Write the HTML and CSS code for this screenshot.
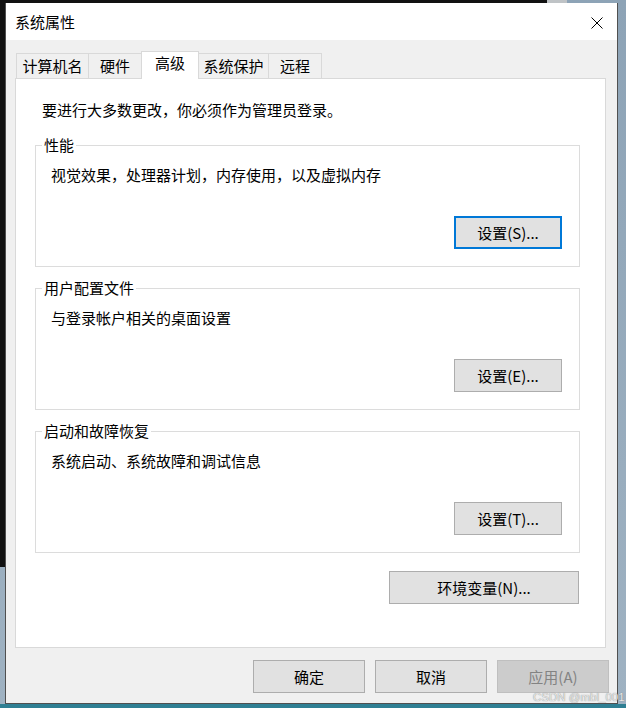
FILE: index.html
```html
<!DOCTYPE html>
<html lang="zh-CN">
<head>
<meta charset="utf-8">
<title>系统属性</title>
<link rel="stylesheet" href="styles.css">
</head>
<body>
<div class="window">
  <div class="titlebar">
    <span class="title">系统属性</span>
    <svg class="close" width="12" height="12" viewBox="0 0 12 12"><path d="M0.5 0.5 L11.5 11.5 M11.5 0.5 L0.5 11.5" stroke="#000" stroke-width="1" fill="none"/></svg>
  </div>
  <div class="content">
    <div class="tabs">
      <div class="tab t1">计算机名</div>
      <div class="tab t2">硬件</div>
      <div class="tab t3 selected">高级</div>
      <div class="tab t4">系统保护</div>
      <div class="tab t5">远程</div>
    </div>
    <div class="panel">
      <div class="intro">要进行大多数更改，你必须作为管理员登录。</div>
      <div class="groups">
        <div class="group">
          <span class="legend">性能</span>
          <div class="gtext">视觉效果，处理器计划，内存使用，以及虚拟内存</div>
          <button class="btn gbtn focused">设置(S)...</button>
        </div>
        <div class="group">
          <span class="legend">用户配置文件</span>
          <div class="gtext">与登录帐户相关的桌面设置</div>
          <button class="btn gbtn">设置(E)...</button>
        </div>
        <div class="group">
          <span class="legend">启动和故障恢复</span>
          <div class="gtext">系统启动、系统故障和调试信息</div>
          <button class="btn gbtn">设置(T)...</button>
        </div>
      </div>
      <button class="btn envbtn">环境变量(N)...</button>
    </div>
    <div class="footer">
      <button class="btn fbtn">确定</button>
      <button class="btn fbtn">取消</button>
      <button class="btn fbtn disabled">应用(A)</button>
    </div>
  </div>
</div>
<div class="watermark">CSDN @mbl_001</div>
</body>
</html>
```
FILE: styles.css
```css
html, body {
  margin: 0;
  padding: 0;
}
body {
  width: 626px;
  height: 708px;
  overflow: hidden;
  position: relative;
  font-family: "Noto Sans CJK SC", "Noto Sans", sans-serif;
  font-size: 15px;
  color: #000;
  background:
    linear-gradient(#111, #111) no-repeat 0 0 / 547px 3px,
    linear-gradient(#bfc3c6, #bfc3c6) no-repeat 547px 0 / 20px 3px,
    linear-gradient(#111, #111) no-repeat 0 0 / 5px 567px,
    linear-gradient(#2f7f93, #2f7f93) no-repeat 0 704px / 100% 4px,
    linear-gradient(180deg, #8da3b6, #9fb2c2);
}
.window {
  margin: 3px 0 0 5px;
  width: 613px;
  height: 701px;
  box-sizing: border-box;
  border: 1px solid #505050;
  border-top: none;
  background: #f0f0f0;
  display: flex;
  flex-direction: column;
}
.titlebar {
  height: 37px;
  flex: none;
  background: #fff;
  display: flex;
  align-items: center;
  justify-content: space-between;
  padding: 0 14px 0 9px;
}
.title {
  font-size: 15px;
  line-height: 20px;
}
.close {
  display: block;
  margin-top: 2px;
}
.content {
  flex: 1;
  display: flex;
  flex-direction: column;
  padding: 11px 11px 0 9px;
}
.tabs {
  height: 27px;
  display: flex;
  align-items: flex-end;
  padding-left: 1px;
  position: relative;
  z-index: 1;
}
.tab {
  height: 25px;
  box-sizing: border-box;
  border: 1px solid #d9d9d9;
  border-bottom: none;
  background: #f0f0f0;
  text-align: center;
  line-height: 24px;
  font-size: 15px;
  margin-left: -1px;
}
.t1 { width: 73px; margin-left: 0; }
.t2 { width: 54px; }
.t3 { width: 58px; }
.t4 { width: 71px; }
.t5 { width: 54px; }
.tab.selected {
  height: 28px;
  margin-bottom: -1px;
  background: #fff;
  line-height: 22px;
  position: relative;
  z-index: 2;
}
.panel {
  height: 570px;
  box-sizing: border-box;
  border: 1px solid #d9d9d9;
  background: #fff;
  display: flex;
  flex-direction: column;
}
.intro {
  margin: 21px 0 0 26px;
  line-height: 20px;
}
.groups {
  margin: 25px 0 0 19px;
  width: 545px;
  display: flex;
  flex-direction: column;
  gap: 21px;
}
.group {
  position: relative;
  height: 122px;
  box-sizing: border-box;
  border: 1px solid #dcdcdc;
  display: flex;
  flex-direction: column;
}
.legend {
  position: absolute;
  top: -11px;
  left: 6px;
  padding: 0 2px;
  background: #fff;
  line-height: 20px;
}
.gtext {
  margin: 19px 0 0 15px;
  line-height: 20px;
}
.btn {
  font-family: "Noto Sans CJK SC", "Noto Sans", sans-serif;
  font-size: 15px;
  color: #000;
  background: #e1e1e1;
  border: 1px solid #adadad;
  height: 33px;
  box-sizing: border-box;
  padding: 0;
  line-height: 20px;
  text-align: center;
}
.gbtn {
  width: 108px;
  align-self: flex-end;
  margin: 31px 17px 0 0;
}
.gbtn.focused {
  border: 2px solid #0078d7;
}
.envbtn {
  width: 190px;
  align-self: flex-end;
  margin: 18px 26px 0 0;
}
.footer {
  margin-top: 12px;
  display: flex;
  justify-content: flex-end;
  gap: 10px;
  margin-right: -3px;
}
.fbtn {
  width: 112px;
}
.fbtn.disabled {
  background: #cccccc;
  border-color: #bfbfbf;
  color: #838383;
}
.watermark {
  position: absolute;
  left: 533px;
  top: 690px;
  white-space: nowrap;
  font-family: "Liberation Sans", Arial, sans-serif;
  font-size: 11.5px;
  line-height: 14px;
  color: #e8e8e8;
  text-shadow: 0 0 1px #6e6e6e;
}
```
